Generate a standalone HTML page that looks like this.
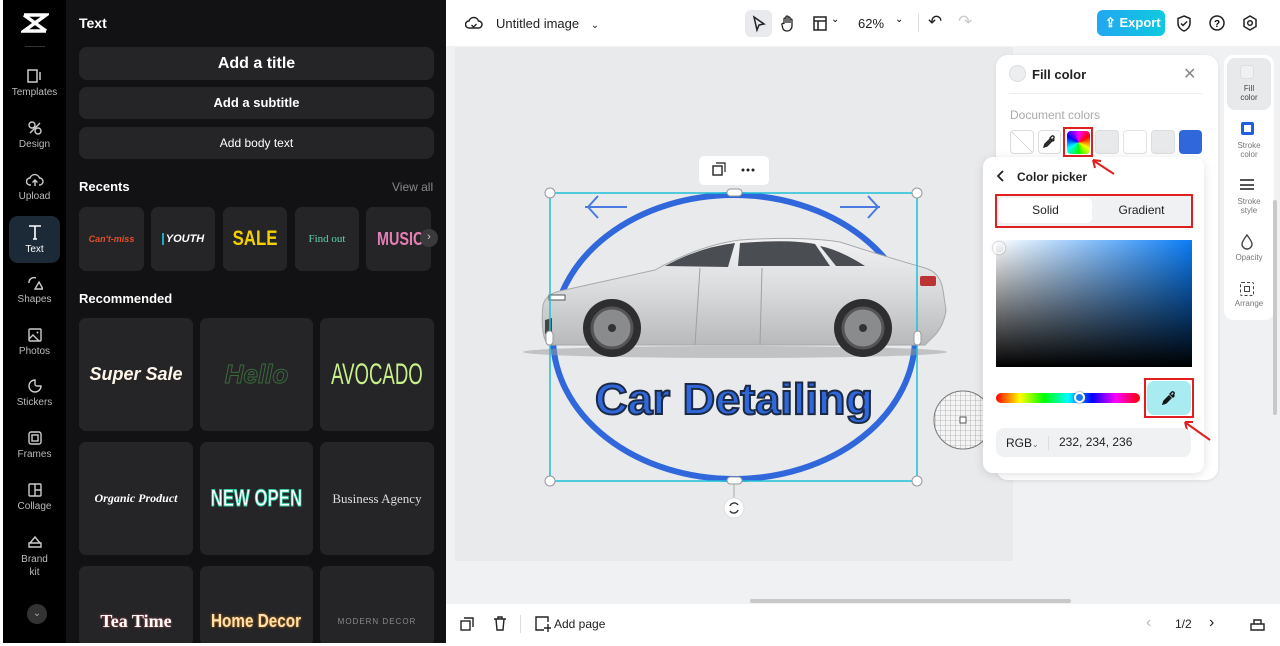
<!DOCTYPE html>
<html><head><meta charset="utf-8"><style>
*{box-sizing:border-box;margin:0;padding:0}
body{width:1280px;height:646px;overflow:hidden;font-family:"Liberation Sans",sans-serif;background:#fff;position:relative}
.a{position:absolute}
.rail{left:3px;top:0;width:63px;height:643px;background:#000}
.ri{position:absolute;left:0;width:63px;text-align:center;color:#bbb;font-size:10px}
.ri svg{display:block;margin:0 auto 3px}
.pan{left:66px;top:0;width:380px;height:643px;background:#121214;color:#fff}
.btn{position:absolute;left:13px;width:355px;background:#252528;border-radius:8px;text-align:center;font-weight:bold}
.tile{position:absolute;background:#252528;border-radius:7px;display:flex;align-items:center;justify-content:center;overflow:hidden;white-space:nowrap}
.main{left:446px;top:0;width:834px;height:646px;background:#f0f1f3}
.top{left:446px;top:0;width:834px;height:46px;background:#fff}
.bot{left:446px;top:604px;width:834px;height:42px;background:#fff}
</style></head><body>
<div class="a rail">
 <svg class="a" style="left:18px;top:12px" width="28" height="22" viewBox="0 0 28 22"><path d="M3 3h22L3 19h22M3 3l22 16" stroke="#fff" stroke-width="3.5" fill="none"/></svg>
 <div class="a" style="left:22px;top:46px;width:20px;height:1px;background:#333"></div>
 <div class="ri" style="top:68px"><svg width="16" height="16"><rect x="1" y="2" width="9" height="12" fill="none" stroke="#ccc" stroke-width="1.5"/><path d="M13 4v8" stroke="#ccc" stroke-width="1.5"/></svg>Templates</div>
 <div class="ri" style="top:120px"><svg width="16" height="16"><circle cx="5" cy="5" r="3" fill="none" stroke="#ccc" stroke-width="1.4"/><circle cx="11" cy="11" r="3" fill="none" stroke="#ccc" stroke-width="1.4"/><path d="M13 3L3 13" stroke="#ccc" stroke-width="1.4"/></svg>Design</div>
 <div class="ri" style="top:172px"><svg width="18" height="16"><path d="M5 13H4a3.5 3.5 0 010-7 5 5 0 019.5 0 3.5 3.5 0 010 7H13M9 14V8M6.5 10.5L9 8l2.5 2.5" fill="none" stroke="#ccc" stroke-width="1.4"/></svg>Upload</div>
 <div class="a" style="left:6px;top:216px;width:51px;height:47px;background:#1c2a38;border-radius:9px"></div>
 <div class="ri" style="top:223px;color:#fff"><svg width="18" height="18"><path d="M3 3h12M9 3v13M7 16h4" stroke="#fff" stroke-width="1.6" fill="none"/></svg>Text</div>
 <div class="ri" style="top:275px"><svg width="16" height="16"><path d="M2 8a5 5 0 017-5M8 14l4-7 4 7z" fill="none" stroke="#ccc" stroke-width="1.4"/></svg>Shapes</div>
 <div class="ri" style="top:327px"><svg width="16" height="16"><rect x="2" y="2" width="12" height="12" rx="1" fill="none" stroke="#ccc" stroke-width="1.4"/><path d="M2 12l4-4 6 6" fill="none" stroke="#ccc" stroke-width="1.4"/><circle cx="10.5" cy="5.5" r="1" fill="#ccc"/></svg>Photos</div>
 <div class="ri" style="top:378px"><svg width="16" height="16"><path d="M8 2a6 6 0 106 6h-4a2 2 0 01-2-2z" fill="none" stroke="#ccc" stroke-width="1.4"/></svg>Stickers</div>
 <div class="ri" style="top:430px"><svg width="16" height="16"><rect x="2" y="2" width="12" height="12" rx="2" fill="none" stroke="#ccc" stroke-width="1.4"/><rect x="5" y="5" width="6" height="6" fill="none" stroke="#ccc" stroke-width="1.4"/></svg>Frames</div>
 <div class="ri" style="top:482px"><svg width="16" height="16"><rect x="2" y="2" width="12" height="12" rx="1" fill="none" stroke="#ccc" stroke-width="1.4"/><path d="M8 2v12M8 8h6" stroke="#ccc" stroke-width="1.4"/></svg>Collage</div>
 <div class="ri" style="top:534px;line-height:13px"><svg width="16" height="16"><path d="M2 9h12v4H2zM3 9l5-6 5 6" fill="none" stroke="#ccc" stroke-width="1.4"/></svg>Brand<br>kit</div>
 <div class="a" style="left:24px;top:604px;width:20px;height:20px;border-radius:50%;background:#333;color:#aaa;font-size:10px;text-align:center;line-height:20px">⌄</div>
</div>
<div class="a pan">
 <div class="a" style="left:13px;top:15px;font-size:14px;font-weight:bold">Text</div>
 <div class="btn" style="top:47px;height:33px;line-height:33px;font-size:16px">Add a title</div>
 <div class="btn" style="top:87px;height:32px;line-height:32px;font-size:13px">Add a subtitle</div>
 <div class="btn" style="top:127px;height:32px;line-height:32px;font-size:12px;font-weight:normal">Add body text</div>
 <div class="a" style="left:13px;top:179px;font-size:13px;font-weight:bold">Recents</div>
 <div class="a" style="left:326px;top:180px;font-size:12px;color:#888">View all</div>
 <div class="tile" style="left:13px;top:207px;width:65px;height:64px;color:#e0502a;font-size:9px;font-style:italic;font-weight:bold">Can't-miss</div>
 <div class="tile" style="left:85px;top:207px;width:64px;height:64px;color:#fff;font-size:11px;font-weight:bold;font-style:italic"><span style="border-left:2px solid #2ab;padding-left:2px">YOUTH</span></div>
 <div class="tile" style="left:157px;top:207px;width:64px;height:64px;color:#f5d000;font-size:21px;font-weight:bold"><span style="display:inline-block;transform:scaleX(.8)">SALE</span></div>
 <div class="tile" style="left:229px;top:207px;width:64px;height:64px;color:#5cd4a8;font-size:11px;font-family:'Liberation Serif',serif">Find out</div>
 <div class="tile" style="left:300px;top:207px;width:65px;height:64px;justify-content:flex-start;padding-left:11px;color:#e47fb5;font-size:18px;font-weight:bold"><span style="display:inline-block;transform:scaleX(.8);transform-origin:left">MUSIC</span></div>
 <div class="a" style="left:354px;top:229px;width:18px;height:18px;border-radius:50%;background:#3a3a3d;color:#ccc;font-size:11px;text-align:center;line-height:17px">›</div>
 <div class="a" style="left:13px;top:291px;font-size:13px;font-weight:bold">Recommended</div>
 <div class="tile" style="left:13px;top:318px;width:114px;height:113px;font-size:18px;font-weight:bold;font-style:italic;color:#fff5e8">Super Sale</div>
 <div class="tile" style="left:134px;top:318px;width:113px;height:113px;font-size:26px;font-weight:bold;font-style:italic;color:transparent;-webkit-text-stroke:1px #3a6a3a">Hello</div>
 <div class="tile" style="left:254px;top:318px;width:114px;height:113px;font-size:30px;color:#c8f08a"><span style="display:inline-block;transform:scaleX(.62)">AVOCADO</span></div>
 <div class="tile" style="left:13px;top:442px;width:114px;height:113px;font-size:12px;font-weight:bold;font-style:italic;color:#fff;font-family:'Liberation Serif',serif">Organic Product</div>
 <div class="tile" style="left:134px;top:442px;width:113px;height:113px;font-size:24px;font-weight:bold;color:#fff;-webkit-text-stroke:1px #2fc9a0"><span style="display:inline-block;transform:scaleX(.7)">NEW OPEN</span></div>
 <div class="tile" style="left:254px;top:442px;width:114px;height:113px;font-size:13px;color:#ddd;font-family:'Liberation Serif',serif">Business Agency</div>
 <div class="tile" style="left:13px;top:566px;width:114px;height:80px;padding-top:30px;font-size:18px;font-weight:bold;color:#fff;font-family:'Liberation Serif',serif;text-shadow:0 0 2px #c55">Tea Time</div>
 <div class="tile" style="left:134px;top:566px;width:113px;height:80px;padding-top:30px;font-size:18px;font-weight:bold;color:#ffe0b0;text-shadow:0 0 3px #c70"><span style="display:inline-block;transform:scaleX(.85)">Home Decor</span></div>
 <div class="tile" style="left:254px;top:566px;width:114px;height:80px;padding-top:30px;font-size:8px;color:#888;letter-spacing:1px">MODERN DECOR</div>
</div>
<div class="a" style="left:446px;top:300px;width:7px;height:44px;background:#222;border-radius:0 4px 4px 0"></div>
<div class="a main"></div>
<div class="a" style="left:455px;top:47px;width:558px;height:514px;background:#e9eaec"></div>
<div class="a top">
 <svg class="a" style="left:19px;top:15px" width="18" height="16"><path d="M5 13H4a3.5 3.5 0 010-7 5 5 0 019.5 0 3.5 3.5 0 010 7H5z" fill="none" stroke="#222" stroke-width="1.5"/><path d="M6.5 10l2 2 3-3" stroke="#222" fill="none" stroke-width="1.3"/></svg>
 <div class="a" style="left:50px;top:16px;font-size:13px;color:#222">Untitled image <span style="margin-left:8px;font-size:10px">⌄</span></div>
 <div class="a" style="left:299px;top:10px;width:27px;height:27px;background:#e8eaed;border-radius:6px"></div>
 <svg class="a" style="left:305px;top:15px" width="16" height="18"><path d="M3 2l10 7-5 1-2 5z" fill="none" stroke="#222" stroke-width="1.5"/></svg>
 <svg class="a" style="left:334px;top:14px" width="16" height="18"><path d="M4 9V5a1 1 0 012 0v4V3a1 1 0 012 0v6V4a1 1 0 012 0v5-3a1 1 0 012 0v6a5 5 0 01-5 5 5 5 0 01-4-2L2 11a1 1 0 012-1z" fill="none" stroke="#222" stroke-width="1.3"/></svg>
 <svg class="a" style="left:367px;top:16px" width="14" height="15"><rect x="1" y="1" width="12" height="13" fill="none" stroke="#222" stroke-width="1.5"/><path d="M1 5h12M5 5v9" stroke="#222" stroke-width="1.5"/></svg>
 <div class="a" style="left:385px;top:14px;font-size:10px">⌄</div>
 <div class="a" style="left:412px;top:16px;font-size:13px;color:#222">62%</div>
 <div class="a" style="left:449px;top:14px;font-size:10px">⌄</div>
 <div class="a" style="left:472px;top:14px;width:1px;height:18px;background:#ddd"></div>
 <div class="a" style="left:482px;top:12px;font-size:17px;color:#222">↶</div>
 <div class="a" style="left:512px;top:12px;font-size:17px;color:#ccc">↷</div>
 <div class="a" style="left:651px;top:10px;width:68px;height:26px;border-radius:6px;background:linear-gradient(90deg,#22a7f0,#10c9e0);color:#fff;font-size:13px;font-weight:bold;line-height:26px;padding-left:8px;white-space:nowrap">⇪ Export</div>
 <svg class="a" style="left:730px;top:15px" width="16" height="17"><path d="M8 1l6 2.5v5C14 12 11 15 8 16 5 15 2 12 2 8.5v-5z" fill="none" stroke="#222" stroke-width="1.5"/><path d="M5 8.5l2 2 4-4" fill="none" stroke="#222" stroke-width="1.5"/></svg>
 <svg class="a" style="left:763px;top:15px" width="16" height="16"><circle cx="8" cy="8" r="7" fill="none" stroke="#222" stroke-width="1.5"/><text x="8" y="12" font-size="10" font-weight="bold" text-anchor="middle" font-family="Liberation Sans">?</text></svg>
 <svg class="a" style="left:796px;top:15px" width="16" height="16"><path d="M8 1l6 3.5v7L8 15l-6-3.5v-7z" fill="none" stroke="#222" stroke-width="1.5"/><circle cx="8" cy="8" r="2.3" fill="none" stroke="#222" stroke-width="1.5"/></svg>
</div>
<svg class="a" style="left:446px;top:46px" width="834" height="558" viewBox="446 46 834 558">
 <defs>
  <linearGradient id="bd" x1="0" y1="0" x2="0" y2="1"><stop offset="0" stop-color="#f2f2f3"/><stop offset=".5" stop-color="#d9dadc"/><stop offset="1" stop-color="#b8b9bb"/></linearGradient>
  <pattern id="g" width="5" height="5" patternUnits="userSpaceOnUse"><path d="M5 0H0V5" fill="none" stroke="#888" stroke-width=".6"/></pattern>
 </defs>
 <ellipse cx="734" cy="337" rx="181" ry="142" fill="none" stroke="#3068dc" stroke-width="6"/>
 <path d="M585 207h42M598 196l-10 11 10 11M880 207h-40M868 196l10 11-10 11" stroke="#4a7ae0" stroke-width="2" fill="none"/>
 <ellipse cx="735" cy="352" rx="212" ry="6" fill="#999" opacity=".5"/>
 <path d="M543 305Q546 294 560 291L655 270Q700 245 740 240Q800 236 840 242Q880 255 925 268Q940 272 943 290L946 310Q944 325 935 335L925 345H548Q540 335 543 305Z" fill="url(#bd)" stroke="#a8a9ab"/>
 <path d="M665 266Q700 247 735 243L728 267ZM740 243Q790 239 815 244L830 266H738ZM820 246Q840 250 865 266H836Z" fill="#4a4d52"/>
 <path d="M700 268L695 345M762 268L760 345" stroke="#a0a0a2" stroke-width="1"/>
 <path d="M545 320L552 318V334H545Z" fill="#444"/><rect x="549" y="295" width="16" height="5" fill="#fff" stroke="#555"/>
 <rect x="920" y="276" width="16" height="10" fill="#b33" rx="2"/>
 <circle cx="612" cy="328" r="29" fill="#2e2e30"/><circle cx="612" cy="328" r="20" fill="#8a8b8d" stroke="#555" stroke-width="3"/><circle cx="612" cy="328" r="4" fill="#333"/>
 <circle cx="863" cy="328" r="29" fill="#2e2e30"/><circle cx="863" cy="328" r="20" fill="#8a8b8d" stroke="#555" stroke-width="3"/><circle cx="863" cy="328" r="4" fill="#333"/>
 <text x="734" y="414" text-anchor="middle" font-family="Liberation Sans" font-weight="bold" font-size="44" fill="#3068dc" stroke="#1a2a44" stroke-width="2" textLength="278" lengthAdjust="spacingAndGlyphs">Car Detailing</text>
 <rect x="550" y="193" width="367" height="288" fill="none" stroke="#1ec0d8" stroke-width="1.5"/>
 <g fill="#fff" stroke="#999"><circle cx="550" cy="193" r="5"/><circle cx="917" cy="193" r="5"/><circle cx="550" cy="481" r="5"/><circle cx="917" cy="481" r="5"/>
 <rect x="727" y="189" width="15" height="7" rx="3.5"/><rect x="727" y="477" width="15" height="7" rx="3.5"/><rect x="546" y="331" width="7" height="14" rx="3.5"/><rect x="914" y="331" width="7" height="14" rx="3.5"/></g>
 <path d="M734 484v15" stroke="#aaa"/><circle cx="734" cy="508" r="10" fill="#fff" stroke="#ddd"/>
 <path d="M730 506a4.5 4.5 0 018-1M738 510a4.5 4.5 0 01-8 1" stroke="#333" stroke-width="1.4" fill="none"/>
 <rect x="699" y="156" width="70" height="29" rx="5" fill="#fff"/>
 <rect x="713" y="166" width="9" height="9" fill="none" stroke="#222" stroke-width="1.4"/><path d="M716 163h9v9" fill="none" stroke="#222" stroke-width="1.2"/>
 <circle cx="743" cy="170" r="1.5" fill="#222"/><circle cx="748" cy="170" r="1.5" fill="#222"/><circle cx="753" cy="170" r="1.5" fill="#222"/>
 <circle cx="963" cy="420" r="29" fill="#f4f4f4"/><circle cx="963" cy="420" r="29" fill="url(#g)" stroke="#777"/>
 <rect x="960" y="417" width="6" height="6" fill="#fff" stroke="#555"/>
 <rect x="750" y="599" width="321" height="4" rx="2" fill="#c8c8c8"/>
</svg>
<!-- fill color panel -->
<div class="a" style="left:996px;top:55px;width:222px;height:425px;background:#fff;border-radius:12px;box-shadow:0 1px 4px rgba(0,0,0,.08)"></div>
<div class="a" style="left:1009px;top:65px;width:17px;height:17px;border-radius:50%;background:#eceef0;border:1px solid #ddd"></div>
<div class="a" style="left:1032px;top:67px;font-size:13px;font-weight:bold;color:#222">Fill color</div>
<div class="a" style="left:1183px;top:64px;font-size:16px;color:#888">✕</div>
<div class="a" style="left:1009px;top:93px;width:194px;height:1px;background:#eee"></div>
<div class="a" style="left:1010px;top:108px;font-size:12px;color:#aaa">Document colors</div>
<div class="a" style="left:1010px;top:130px;width:24px;height:24px;border:1px solid #ddd;border-radius:4px;background:linear-gradient(45deg,#fff 48%,#ccc 50%,#fff 52%)"></div>
<div class="a" style="left:1038px;top:130px;width:23px;height:24px;border:1px solid #ddd;border-radius:4px"></div>
<svg class="a" style="left:1042px;top:134px" width="15" height="15"><path d="M3 12l6-6M2 13l1-3 5-5 2 2-5 5zM9 3l1-1a1.5 1.5 0 012 2l-1 1 1 1-1 1-3-3 1-1z" fill="none" stroke="#222" stroke-width="1.3"/></svg>
<div class="a" style="left:1063px;top:127px;width:30px;height:30px;border:2px solid #e02020"></div>
<div class="a" style="left:1067px;top:131px;width:23px;height:23px;border-radius:4px;background:conic-gradient(#f0f,#f00,#ff0,#0f0,#0ff,#00f,#f0f)"></div>
<div class="a" style="left:1095px;top:130px;width:24px;height:24px;border:1px solid #ddd;border-radius:4px;background:#e8e9eb"></div>
<div class="a" style="left:1123px;top:130px;width:24px;height:24px;border:1px solid #e3e3e3;border-radius:4px;background:#fff"></div>
<div class="a" style="left:1151px;top:130px;width:24px;height:24px;border:1px solid #ddd;border-radius:4px;background:#e8e9eb"></div>
<div class="a" style="left:1179px;top:130px;width:23px;height:24px;border-radius:4px;background:#3068dc"></div>
<!-- picker -->
<div class="a" style="left:983px;top:157px;width:221px;height:316px;background:#fff;border-radius:10px;box-shadow:0 2px 10px rgba(0,0,0,.12)"></div>
<svg class="a" style="left:1088px;top:155px;z-index:3" width="30" height="22"><path d="M26 19L6 6M5 5l2 8M5 5l8 1" stroke="#e02020" stroke-width="2" fill="none"/></svg>
<svg class="a" style="left:996px;top:170px" width="10" height="12"><path d="M7 1L2 6l5 5" stroke="#222" stroke-width="1.8" fill="none"/></svg>
<div class="a" style="left:1017px;top:170px;font-size:12px;font-weight:bold;color:#222">Color picker</div>
<div class="a" style="left:995px;top:194px;width:198px;height:34px;border:2px solid #e02020"></div>
<div class="a" style="left:997px;top:196px;width:194px;height:30px;background:#f0f1f3"></div>
<div class="a" style="left:999px;top:198px;width:93px;height:25px;background:#fff;border-radius:5px;text-align:center;line-height:25px;font-size:12px;color:#222">Solid</div>
<div class="a" style="left:1094px;top:198px;width:95px;height:25px;text-align:center;line-height:25px;font-size:12px;color:#222">Gradient</div>
<div class="a" style="left:996px;top:240px;width:196px;height:127px;background:linear-gradient(to bottom,transparent,#000),linear-gradient(to right,#fff,#0a7cf5)"></div>
<div class="a" style="left:993px;top:242px;width:12px;height:12px;border-radius:50%;border:1.5px solid #fff;box-shadow:0 0 2px #888"></div>
<div class="a" style="left:996px;top:393px;width:144px;height:10px;border-radius:5px;background:linear-gradient(90deg,#f00,#ff0,#0f0,#0ff,#00f,#f0f,#f00)"></div>
<div class="a" style="left:1074px;top:392px;width:11px;height:11px;border-radius:50%;border:2px solid #fff;background:#1a7cf0;box-shadow:0 0 2px #666"></div>
<div class="a" style="left:1144px;top:378px;width:50px;height:40px;border:2px solid #e02020"></div>
<div class="a" style="left:1147px;top:381px;width:44px;height:34px;background:#a8ecf2;border-radius:7px"></div>
<svg class="a" style="left:1161px;top:390px" width="16" height="16"><path d="M3 13l6-6M2 14l1-3 5-5 2 2-5 5zM10 3l1-1a1.5 1.5 0 012 2l-1 1 1 1-1 1-3-3 1-1z" fill="none" stroke="#111" stroke-width="1.4"/></svg>
<svg class="a" style="left:1180px;top:418px" width="34" height="26"><path d="M30 22L6 5M5 4l2 8M5 4l8 0" stroke="#e02020" stroke-width="2" fill="none"/></svg>
<div class="a" style="left:996px;top:428px;width:195px;height:29px;background:#f0f1f3;border-radius:8px"></div>
<div class="a" style="left:1006px;top:436px;font-size:12px;color:#222">RGB<span style="font-size:8px;color:#666">⌄</span></div>
<div class="a" style="left:1048px;top:436px;width:1px;height:14px;background:#ddd"></div>
<div class="a" style="left:1059px;top:435px;font-size:12px;color:#222">232, 234, 236</div>
<!-- right toolbar -->
<div class="a" style="left:1224px;top:55px;width:50px;height:265px;background:#fff;border-radius:9px"></div>
<div class="a" style="left:1227px;top:58px;width:44px;height:52px;background:#e8e9eb;border-radius:8px"></div>
<div class="a" style="left:1240px;top:65px;width:14px;height:14px;border:1px solid #ddd;border-radius:3px;background:#f1f1f1"></div>
<div class="a" style="left:1227px;top:84px;width:44px;text-align:center;font-size:8px;line-height:9px;color:#444">Fill<br>color</div>
<div class="a" style="left:1241px;top:122px;width:13px;height:13px;border:3px solid #1f5fe0;border-radius:2px"></div>
<div class="a" style="left:1227px;top:141px;width:44px;text-align:center;font-size:8px;line-height:9px;color:#777">Stroke<br>color</div>
<div class="a" style="left:1240px;top:179px;width:14px;height:11px;border-top:2px solid #555;border-bottom:2px solid #555"></div>
<div class="a" style="left:1240px;top:184px;width:14px;height:2px;background:#555"></div>
<div class="a" style="left:1227px;top:197px;width:44px;text-align:center;font-size:8px;line-height:9px;color:#777">Stroke<br>style</div>
<svg class="a" style="left:1240px;top:234px" width="14" height="16"><path d="M7 1C4 5 2 8 2 10a5 5 0 0010 0c0-2-2-5-5-9z" fill="none" stroke="#444" stroke-width="1.4"/></svg>
<div class="a" style="left:1227px;top:253px;width:44px;text-align:center;font-size:8px;color:#777">Opacity</div>
<div class="a" style="left:1240px;top:282px;width:14px;height:14px;border:1.5px dashed #444;border-radius:2px"></div>
<div class="a" style="left:1244px;top:286px;width:6px;height:6px;border:1.3px solid #444"></div>
<div class="a" style="left:1227px;top:299px;width:44px;text-align:center;font-size:8px;color:#777">Arrange</div>
<div class="a" style="left:1273px;top:200px;width:4px;height:215px;background:#c8c8c8;border-radius:2px"></div>
<!-- bottom -->
<div class="a bot">
 <svg class="a" style="left:14px;top:13px" width="14" height="14"><rect x="1" y="4" width="9" height="9" fill="none" stroke="#222" stroke-width="1.4"/><path d="M4 1h9v9" fill="none" stroke="#222" stroke-width="1.4"/></svg>
 <svg class="a" style="left:47px;top:12px" width="14" height="15"><path d="M1 3h12M5 3V1h4v2M3 3l1 11h6l1-11" fill="none" stroke="#222" stroke-width="1.4"/></svg>
 <div class="a" style="left:74px;top:11px;width:1px;height:18px;background:#ddd"></div>
 <svg class="a" style="left:89px;top:12px" width="16" height="16"><path d="M9 1H1v13h8M13 8v8M9 12h8" fill="none" stroke="#222" stroke-width="1.4"/><path d="M9 1h4v5" fill="none" stroke="#222" stroke-width="1.4"/></svg>
 <div class="a" style="left:108px;top:13px;font-size:12px;color:#222">Add page</div>
 <div class="a" style="left:700px;top:10px;font-size:16px;color:#bbb">‹</div>
 <div class="a" style="left:729px;top:13px;font-size:12px;color:#222">1/2</div>
 <div class="a" style="left:763px;top:10px;font-size:16px;color:#222">›</div>
 <svg class="a" style="left:804px;top:13px" width="15" height="14"><path d="M1 7h13v6H1zM4 7V3h7v4" fill="none" stroke="#222" stroke-width="1.4"/></svg>
</div>
<div class="a" style="left:0;top:0;width:3px;height:646px;background:#fff"></div>
<div class="a" style="left:0;top:643px;width:1280px;height:3px;background:#fff"></div>
</body></html>
